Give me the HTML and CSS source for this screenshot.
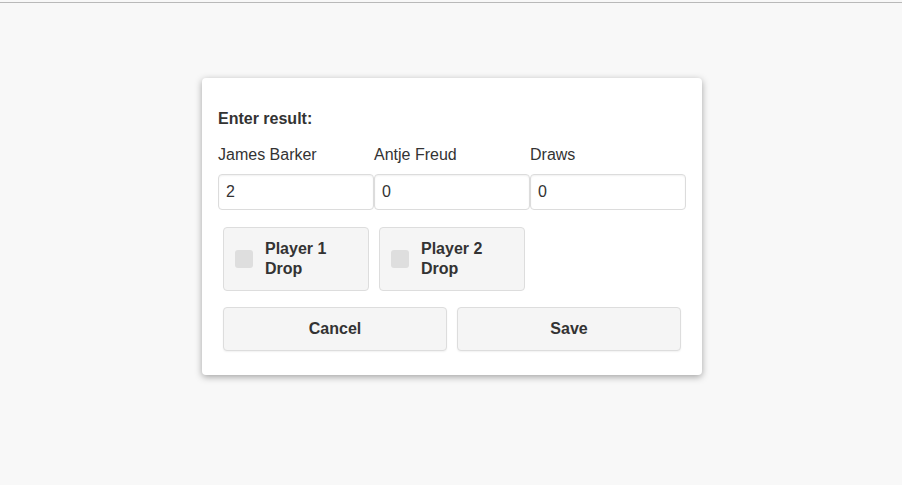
FILE: index.html
```html
<!DOCTYPE html>
<html>
<head>
<meta charset="utf-8">
<link rel="stylesheet" href="styles.css">
</head>
<body>
<div class="topline"></div>
<div class="stage">
<div class="dialog">
  <div class="title">Enter result:</div>
  <div class="row labels">
    <label class="label">James Barker</label>
    <label class="label">Antje Freud</label>
    <label class="label">Draws</label>
  </div>
  <div class="row inputs">
    <input class="field" type="text" value="2">
    <input class="field" type="text" value="0">
    <input class="field" type="text" value="0">
  </div>
  <div class="row tiles">
    <div class="tile"><span class="check"></span><span class="tile-text">Player 1 Drop</span></div>
    <div class="tile"><span class="check"></span><span class="tile-text">Player 2 Drop</span></div>
  </div>
  <div class="actions">
    <button class="btn">Cancel</button>
    <button class="btn">Save</button>
  </div>
</div>
</div>
</body>
</html>
```
FILE: styles.css
```css
html, body {
  margin: 0;
  padding: 0;
}
body {
  background: #f8f8f8;
  font-family: "Liberation Sans", Arial, sans-serif;
  font-size: 16px;
  color: #333;
  height: 485px;
  overflow: hidden;
}
.topline {
  margin-top: 2px;
  height: 1px;
  background: #b9b9b9;
}
.stage {
  padding-left: 2px;
}
.dialog {
  box-sizing: border-box;
  width: 500px;
  margin: 75px auto 0;
  background: #fff;
  border-radius: 4px;
  box-shadow: 0 2px 7px rgba(0, 0, 0, 0.35);
  padding: 32px 16px 24px;
}
.title {
  font-weight: bold;
  line-height: 18px;
}
.row {
  display: grid;
  grid-template-columns: repeat(3, 156px);
}
.labels {
  margin-top: 18px;
  line-height: 18px;
}
.inputs {
  margin-top: 10px;
}
.field {
  box-sizing: border-box;
  height: 36px;
  width: 156px;
  margin: 0;
  border: 1px solid #dcdcdc;
  border-radius: 4px;
  box-shadow: inset 0 1px 2px rgba(0, 0, 0, 0.06);
  padding: 0 7px;
  font-family: "Liberation Sans", Arial, sans-serif;
  font-size: 16px;
  color: #333;
  background: #fff;
}
.tiles {
  margin-top: 17px;
}
.tile {
  box-sizing: border-box;
  margin: 0 5px;
  height: 64px;
  display: flex;
  align-items: center;
  gap: 12px;
  padding: 0 11px;
  background: #f5f5f5;
  border: 1px solid #dddddd;
  border-radius: 4px;
}
.check {
  flex: none;
  width: 18px;
  height: 18px;
  border-radius: 3px;
  background: #dedede;
}
.tile-text {
  font-weight: bold;
  line-height: 20px;
  width: 80px;
}
.actions {
  margin-top: 16px;
  display: grid;
  grid-template-columns: 1fr 1fr;
}
.btn {
  box-sizing: border-box;
  margin: 0 5px;
  height: 44px;
  background: #f5f5f5;
  border: 1px solid #dddddd;
  border-radius: 4px;
  box-shadow: 0 1px 2px rgba(0, 0, 0, 0.06);
  font-family: "Liberation Sans", Arial, sans-serif;
  font-size: 16px;
  font-weight: bold;
  color: #333;
  padding: 0;
}
```
